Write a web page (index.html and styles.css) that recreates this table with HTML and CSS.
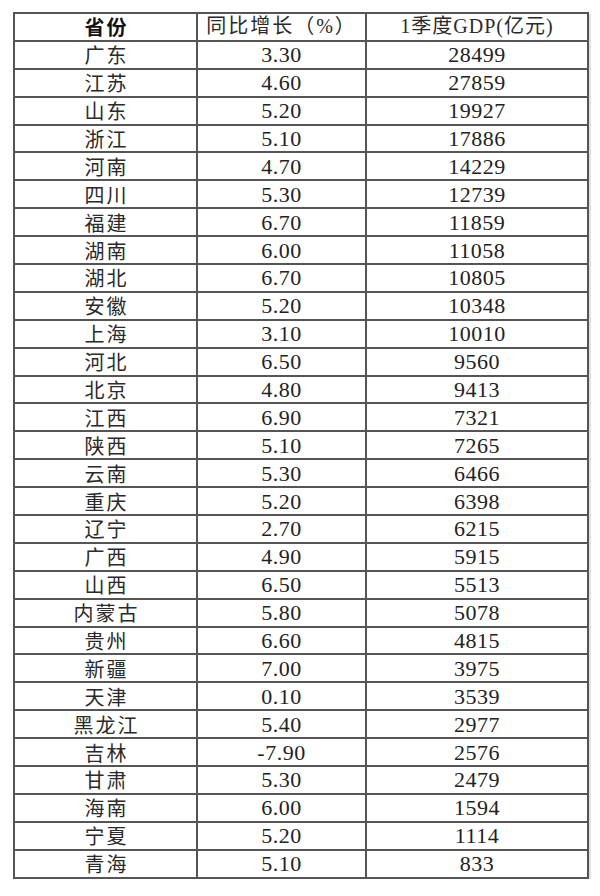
FILE: index.html
```html
<!DOCTYPE html>
<html lang="zh-CN">
<head>
<meta charset="utf-8">
<title>1季度GDP</title>
<link rel="stylesheet" href="styles.css">
</head>
<body>
<table class="gdp">
  <colgroup><col class="c1"><col class="c2"><col class="c3"></colgroup>
  <thead>
    <tr><th class="name bold">省份</th><th class="head wide">同比增长（%）</th><th class="head">1季度GDP(亿元)</th></tr>
  </thead>
  <tbody>
    <tr><td class="name">广东</td><td>3.30</td><td>28499</td></tr>
    <tr><td class="name">江苏</td><td>4.60</td><td>27859</td></tr>
    <tr><td class="name">山东</td><td>5.20</td><td>19927</td></tr>
    <tr><td class="name">浙江</td><td>5.10</td><td>17886</td></tr>
    <tr><td class="name">河南</td><td>4.70</td><td>14229</td></tr>
    <tr><td class="name">四川</td><td>5.30</td><td>12739</td></tr>
    <tr><td class="name">福建</td><td>6.70</td><td>11859</td></tr>
    <tr><td class="name">湖南</td><td>6.00</td><td>11058</td></tr>
    <tr><td class="name">湖北</td><td>6.70</td><td>10805</td></tr>
    <tr><td class="name">安徽</td><td>5.20</td><td>10348</td></tr>
    <tr><td class="name">上海</td><td>3.10</td><td>10010</td></tr>
    <tr><td class="name">河北</td><td>6.50</td><td>9560</td></tr>
    <tr><td class="name">北京</td><td>4.80</td><td>9413</td></tr>
    <tr><td class="name">江西</td><td>6.90</td><td>7321</td></tr>
    <tr><td class="name">陕西</td><td>5.10</td><td>7265</td></tr>
    <tr><td class="name">云南</td><td>5.30</td><td>6466</td></tr>
    <tr><td class="name">重庆</td><td>5.20</td><td>6398</td></tr>
    <tr><td class="name">辽宁</td><td>2.70</td><td>6215</td></tr>
    <tr><td class="name">广西</td><td>4.90</td><td>5915</td></tr>
    <tr><td class="name">山西</td><td>6.50</td><td>5513</td></tr>
    <tr><td class="name">内蒙古</td><td>5.80</td><td>5078</td></tr>
    <tr><td class="name">贵州</td><td>6.60</td><td>4815</td></tr>
    <tr><td class="name">新疆</td><td>7.00</td><td>3975</td></tr>
    <tr><td class="name">天津</td><td>0.10</td><td>3539</td></tr>
    <tr><td class="name">黑龙江</td><td>5.40</td><td>2977</td></tr>
    <tr><td class="name">吉林</td><td>-7.90</td><td>2576</td></tr>
    <tr><td class="name">甘肃</td><td>5.30</td><td>2479</td></tr>
    <tr><td class="name">海南</td><td>6.00</td><td>1594</td></tr>
    <tr><td class="name">宁夏</td><td>5.20</td><td>1114</td></tr>
    <tr><td class="name">青海</td><td>5.10</td><td>833</td></tr>
  </tbody>
</table>
</body>
</html>
```
FILE: styles.css
```css
html, body {
  margin: 0;
  padding: 0;
  background: #ffffff;
}
body {
  padding: 12px 0 0 13px;
}
.gdp {
  border-collapse: collapse;
  table-layout: fixed;
  width: 574px;
  color: #222222;
  font-family: "Liberation Serif", "Noto Sans CJK SC", serif;
  box-shadow: 2px 2px 0 #e2e2e2;
}
.c1 { width: 183px; }
.c2 { width: 169px; }
.c3 { width: 222px; }
.gdp th, .gdp td {
  height: 25.9px;
  padding: 0;
  border: 2px solid #555555;
  text-align: center;
  vertical-align: middle;
  font-weight: normal;
  font-size: 22px;
  line-height: 25px;
  letter-spacing: 0.5px;
}
.gdp .name {
  font-family: "Noto Sans CJK SC", "Liberation Serif", sans-serif;
  font-size: 20px;
  letter-spacing: 2px;
  text-indent: 2px;
  color: #2a2a2a;
}
.gdp .head {
  font-family: "Liberation Serif", "Noto Sans CJK SC", serif;
  font-size: 20px;
  letter-spacing: 1px;
  color: #2a2a2a;
}
.gdp .wide {
  letter-spacing: 2px;
}
.gdp .bold {
  font-weight: bold;
  color: #111111;
}
```
